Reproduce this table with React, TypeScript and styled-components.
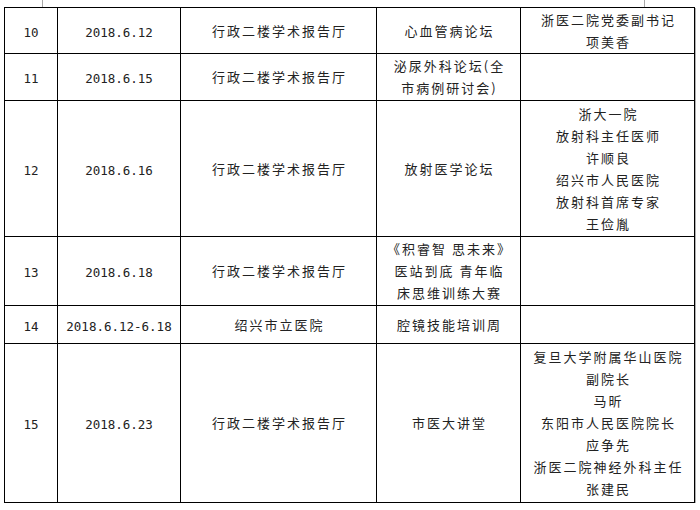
import React from 'react';
import styled, { createGlobalStyle } from 'styled-components';

const GlobalStyle = createGlobalStyle`
  html, body {
    margin: 0;
    padding: 0;
    background: #ffffff;
  }
  body {
    font-family: "Noto Sans CJK SC", sans-serif;
    color: #222;
  }
`;

const Page = styled.div`
  padding-left: 4px;
  width: 690px;
`;

// Word's page-margin corner marks above the table
const MarginMarks = styled.div`
  display: flex;
  justify-content: space-between;
  height: 7px;
  padding: 0 49px 0 38px;
`;

const Mark = styled.span`
  width: 1px;
  background: #a8a8a8;
`;

const Table = styled.table`
  width: 690px;
  table-layout: fixed;
  border-collapse: collapse;
  box-shadow: 1px 1px 0 #b0b0b0;
`;

const Cell = styled.td<{ $height?: number }>`
  border: 1px solid #000;
  padding: 0 6px;
  height: ${p => (p.$height ? `${p.$height - 1}px` : 'auto')};
  text-align: center;
  vertical-align: middle;
  color: #222;
`;

const Mono = styled.span`
  font-family: "DejaVu Sans Mono", "Liberation Mono", monospace;
  font-size: 12.5px;
  line-height: 22px;
  white-space: nowrap;
`;

const Line = styled.div`
  font-family: "Noto Sans CJK SC", sans-serif;
  font-size: 13px;
  letter-spacing: 2px;
  padding-left: 2px;
  line-height: 22px;
  white-space: nowrap;
`;

type Row = {
  no: string;
  date: string;
  place: string;
  topic: string[];
  guest: string[];
  height: number;
};

const rows: Row[] = [
  {
    no: '10',
    date: '2018.6.12',
    place: '行政二楼学术报告厅',
    topic: ['心血管病论坛'],
    guest: ['浙医二院党委副书记', '项美香'],
    height: 46,
  },
  {
    no: '11',
    date: '2018.6.15',
    place: '行政二楼学术报告厅',
    topic: ['泌尿外科论坛(全', '市病例研讨会)'],
    guest: [],
    height: 47,
  },
  {
    no: '12',
    date: '2018.6.16',
    place: '行政二楼学术报告厅',
    topic: ['放射医学论坛'],
    guest: ['浙大一院', '放射科主任医师', '许顺良', '绍兴市人民医院', '放射科首席专家', '王俭胤'],
    height: 136,
  },
  {
    no: '13',
    date: '2018.6.18',
    place: '行政二楼学术报告厅',
    topic: ['《积睿智 思未来》', '医站到底 青年临', '床思维训练大赛'],
    guest: [],
    height: 69,
  },
  {
    no: '14',
    date: '2018.6.12-6.18',
    place: '绍兴市立医院',
    topic: ['腔镜技能培训周'],
    guest: [],
    height: 38,
  },
  {
    no: '15',
    date: '2018.6.23',
    place: '行政二楼学术报告厅',
    topic: ['市医大讲堂'],
    guest: [
      '复旦大学附属华山医院',
      '副院长',
      '马昕',
      '东阳市人民医院院长',
      '应争先',
      '浙医二院神经外科主任',
      '张建民',
    ],
    height: 159,
  },
];

const Lines: React.FC<{ items: string[] }> = ({ items }) => (
  <>
    {items.map((t, i) => (
      <Line key={i}>{t}</Line>
    ))}
  </>
);

export default function App() {
  return (
    <Page>
      <GlobalStyle />
      <MarginMarks>
        <Mark />
        <Mark />
      </MarginMarks>
      <Table>
        <colgroup>
          <col style={{ width: 53 }} />
          <col style={{ width: 123 }} />
          <col style={{ width: 196 }} />
          <col style={{ width: 144 }} />
          <col style={{ width: 174 }} />
        </colgroup>
        <tbody>
          {rows.map(r => (
            <tr key={r.no}>
              <Cell $height={r.height}>
                <Mono>{r.no}</Mono>
              </Cell>
              <Cell>
                <Mono>{r.date}</Mono>
              </Cell>
              <Cell>
                <Line>{r.place}</Line>
              </Cell>
              <Cell>
                <Lines items={r.topic} />
              </Cell>
              <Cell>
                <Lines items={r.guest} />
              </Cell>
            </tr>
          ))}
        </tbody>
      </Table>
    </Page>
  );
}
